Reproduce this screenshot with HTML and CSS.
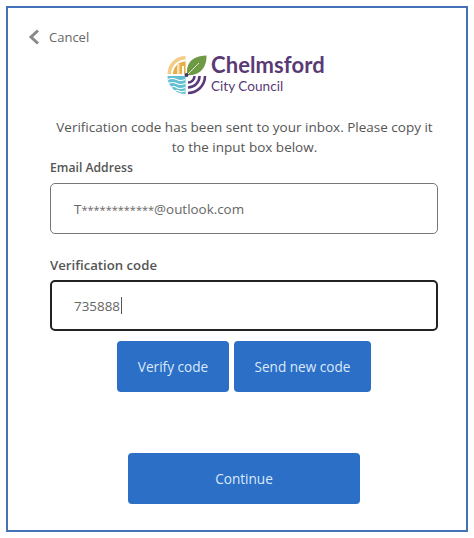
FILE: index.html
```html
<!DOCTYPE html>
<html lang="en">
<head>
<meta charset="utf-8">
<title>Verification</title>
<link rel="stylesheet" href="styles.css">
</head>
<body>
<main class="frame">
  <a class="cancel">
    <svg class="chevron" width="12" height="16" viewBox="0 0 12 16"><path d="M10 1.500 3 8l7 6.500" fill="none" stroke="#8a8a8a" stroke-width="3"/></svg>
    <span>Cancel</span>
  </a>
  <div class="logo">
    <svg class="mark" width="40" height="40" viewBox="0 0 40 40">
      <path d="M18.500 1A18 18 0 0 0 .5 19H18.500Z" fill="#f2cd85"/>
      <path d="M18.500 4.500A14.500 14.500 0 0 0 4 19H18.500Z" fill="#fff"/>
      <path d="M18.500 6.500A12.500 12.500 0 0 0 6 19H18.500Z" fill="#e9ad45"/>
      <rect x="10" y="9" width="2.500" height="10" fill="#f8e3b8"/>
      <rect x="15" y="11" width="2" height="8" fill="#fff"/>
      <path d="M20 20C19 9 24 1 39.500 .5 40 12 33 21.500 20 20Z" fill="#6f9a45"/>
      <path d="M20.500 19.500 32 8" stroke="#dfe9c8" stroke-width="1"/>
      <path d="M.5 21H18.500V39A18 18 0 0 1 .5 21Z" fill="#62c0d2"/>
      <path d="M1 24.500q4.500-2 8.500 0t8.500 0M1.500 28.500q4-2 8 0t8.500 0M3.500 32.500q3-2 6 0t8.500 0M8 36q2-1.500 4 0t6 0" fill="none" stroke="#fff" stroke-width="1.100"/>
      <path d="M21 27.500A6.500 6.500 0 0 0 27.500 21M21 32.500A11.500 11.500 0 0 0 32.500 21M21 38A17 17 0 0 0 38 21" fill="none" stroke="#5b3a78" stroke-width="2.600"/>
      <circle cx="19.500" cy="20" r="2" fill="#4b2e6e"/>
    </svg>
    <div class="wordmark">
      <span class="brand">Chelmsford</span>
      <span class="sub">City Council</span>
    </div>
  </div>
  <p class="intro">Verification code has been sent to your inbox. Please copy it to the input box below.</p>
  <form class="form">
    <label class="label label-email">Email Address</label>
    <div class="field"><span>T<span class="stars">************</span>@outlook.com</span></div>
    <label class="label label-code">Verification code</label>
    <div class="field field-focus">735888<span class="caret"></span></div>
    <div class="actions">
      <button type="button" class="btn btn-verify">Verify code</button>
      <button type="button" class="btn btn-send">Send new code</button>
    </div>
    <button type="button" class="btn btn-continue">Continue</button>
  </form>
</main>
</body>
</html>
```
FILE: styles.css
```css
* { box-sizing: border-box; }
html, body { margin: 0; padding: 0; background: #fff; }
body {
  width: 474px;
  height: 538px;
  padding: 6px;
  font-family: "Open Sans", "Noto Sans", sans-serif;
  color: #555;
  overflow: hidden;
}
.frame {
  width: 462px;
  height: 526px;
  border: 2px solid #4472b8;
  padding: 20px 0 0 20px;
}
.cancel {
  display: flex;
  align-items: center;
  gap: 9px;
  height: 18px;
  font-size: 13px;
  color: #666;
}
.logo {
  display: flex;
  align-items: center;
  gap: 4px;
  margin: 7px 0 0 139px;
  height: 44px;
}
.wordmark {
  display: flex;
  flex-direction: column;
  margin-bottom: 3px;
  font-family: Lato, "Open Sans", sans-serif;
}
.brand {
  font-size: 22px;
  font-weight: 700;
  line-height: 24px;
  color: #5a3a75;
  letter-spacing: 0.1px;
}
.sub {
  font-size: 13.600px;
  line-height: 18px;
  color: #5a3a75;
}
.intro {
  width: 385px;
  margin: 20px 0 0 24px;
  font-size: 13.500px;
  line-height: 20px;
  text-align: center;
  color: #555;
}
.form {
  display: flex;
  flex-direction: column;
  margin: 2px 0 0 22px;
  width: 388px;
}
.label {
  font-weight: 600;
  line-height: 18px;
  color: #555;
}
.label-email { font-size: 12.200px; }
.label-code { font-size: 13.200px; margin-top: 22px; }
.field {
  display: flex;
  align-items: center;
  height: 51px;
  margin-top: 6px;
  padding-left: 23px;
  border: 1px solid #777;
  border-radius: 5px;
  font-size: 13.400px;
  color: #666;
}
.stars { font-size: 11px; }
.field-focus {
  border: 2px solid #222;
  padding-left: 22px;
}
.caret { width: 1px; height: 17px; margin-left: 1px; background: #555; }
.actions {
  display: flex;
  justify-content: center;
  gap: 5px;
  margin-top: 10px;
}
.btn {
  height: 51px;
  border: 0;
  border-radius: 4px;
  background: #2b6fc7;
  color: #dbe9fb;
  font-family: inherit;
  font-size: 13.600px;
  padding: 0;
}
.btn-verify { width: 112px; }
.btn-send { width: 137px; }
.btn-continue { width: 232px; margin: 61px 0 0 78px; }
```
